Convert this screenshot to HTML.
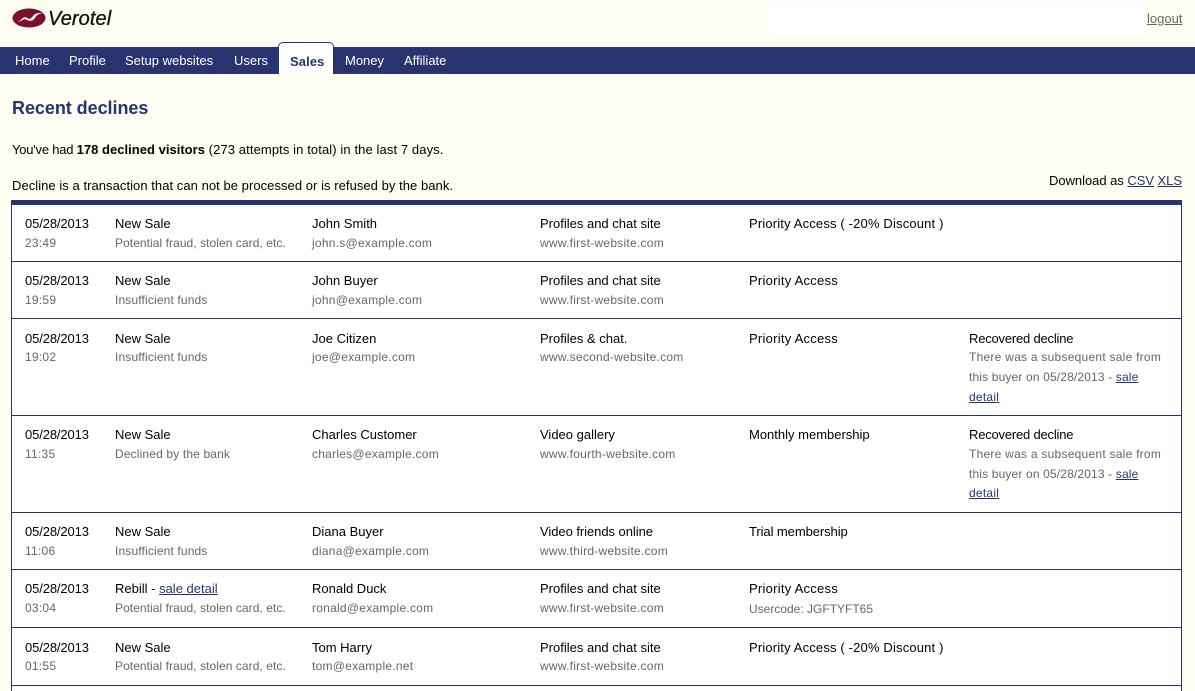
<!DOCTYPE html>
<html><head><meta charset="utf-8"><title>Recent declines</title>
<style>
html,body{margin:0;padding:0}
body{width:1195px;height:691px;overflow:hidden;position:relative;background:#fdfdf2;font-family:"Liberation Sans",Arial,sans-serif;font-size:13px;color:#000;letter-spacing:0}
a{color:#27346f;text-decoration:underline}
.t{position:absolute;white-space:nowrap;line-height:15px}
.g{color:#666;font-size:12px;letter-spacing:.25px;margin-top:1px}
.s{letter-spacing:.06px}
.i{letter-spacing:.15px}
.d{letter-spacing:-.12px}
.p{letter-spacing:.25px}
.r{letter-spacing:-.2px}
.b{position:absolute;background:#27346f}
.n{position:absolute;top:53px;color:#fff;line-height:15px;white-space:nowrap;letter-spacing:0}
.c1{left:25px}.c2{left:115px}.c3{left:312px}.c4{left:540px}.c5{left:749px}.c6{left:969px}
</style></head><body>
<svg style="position:absolute;left:12px;top:8px" width="34" height="20" viewBox="0 0 34 20"><ellipse cx="17" cy="10" rx="16.5" ry="9.5" fill="#7d0f2c"/><path d="M5 14C9 14 10 8 14 9.500C17 11 18 12 21 8C23 5 26 5 31 5C26 6 25 7 23 10C20 14 17 13 14 11.500C11 10 10 14 5 14Z" fill="#fff"/></svg>
<div style="position:absolute;left:48px;top:8px;font-size:20px;line-height:22px;font-style:italic;letter-spacing:.1px;color:#111;-webkit-text-stroke:.3px #111">Verotel</div>
<div style="position:absolute;left:769px;top:2px;width:377px;height:35px;background:#fff"></div>
<a class="t" href="#" style="left:1147px;top:11px;color:#666;letter-spacing:0">logout</a>

<div class="b" style="left:0;top:47px;width:1195px;height:27px"></div>
<div class="n" style="left:15px">Home</div>
<div class="n" style="left:69px">Profile</div>
<div class="n" style="left:125px">Setup websites</div>
<div class="n" style="left:234px">Users</div>
<div style="position:absolute;left:278px;top:42px;background:#fff;border:1px solid #27346f;border-bottom:0;border-radius:5px 5px 0 0;height:31px;width:54px"></div>
<div class="n" style="left:290px;top:54px;color:#27346f;font-weight:bold;letter-spacing:.1px">Sales</div>
<div class="n" style="left:345px">Money</div>
<div class="n" style="left:404px">Affiliate</div>

<div class="t" style="left:12px;top:97px;font-size:18px;line-height:22px;font-weight:bold;color:#27346f;letter-spacing:-.05px">Recent declines</div>
<div class="t" style="left:12px;top:142px;letter-spacing:.1px"><span style="letter-spacing:-.22px">You've had </span><b style="letter-spacing:.02px">178 declined visitors</b> (273 attempts in total) in the last 7 days.</div>
<div class="t" style="left:12px;top:178px;letter-spacing:.05px">Decline is a transaction that can not be processed or is refused by the bank.</div>
<div class="t" style="right:13px;top:173px;letter-spacing:-.04px">Download as <a href="#">CSV</a> <a href="#">XLS</a></div>

<div style="position:absolute;left:11px;top:200px;width:1169px;height:491px;background:#fff;border-left:1px solid #27346f;border-right:1px solid #27346f"></div>
<div class="b" style="left:11px;top:200px;width:1171px;height:5px"></div>
<div class="b" style="left:11px;top:261px;width:1171px;height:1px"></div>
<div class="b" style="left:11px;top:318px;width:1171px;height:1px"></div>
<div class="b" style="left:11px;top:415px;width:1171px;height:1px"></div>
<div class="b" style="left:11px;top:512px;width:1171px;height:1px"></div>
<div class="b" style="left:11px;top:569px;width:1171px;height:1px"></div>
<div class="b" style="left:11px;top:627px;width:1171px;height:1px"></div>
<div class="b" style="left:11px;top:685px;width:1171px;height:1px"></div>

<div class="t c1 d" style="top:216px">05/28/2013</div><div class="t c2" style="top:216px">New Sale</div><div class="t c3" style="top:216px">John Smith</div><div class="t c4" style="top:216px">Profiles and chat site</div><div class="t c5" style="top:216px;letter-spacing:.16px">Priority Access ( -20% Discount )</div>
<div class="t g c1" style="top:235px">23:49</div><div class="t g c2 s" style="top:235px">Potential fraud, stolen card, etc.</div><div class="t g c3" style="top:235px">john.s@example.com</div><div class="t g c4" style="top:235px">www.first-website.com</div>

<div class="t c1 d" style="top:273px">05/28/2013</div><div class="t c2" style="top:273px">New Sale</div><div class="t c3" style="top:273px">John Buyer</div><div class="t c4" style="top:273px">Profiles and chat site</div><div class="t c5 p" style="top:273px">Priority Access</div>
<div class="t g c1" style="top:292px">19:59</div><div class="t g c2 i" style="top:292px">Insufficient funds</div><div class="t g c3" style="top:292px">john@example.com</div><div class="t g c4" style="top:292px">www.first-website.com</div>

<div class="t c1 d" style="top:331px">05/28/2013</div><div class="t c2" style="top:331px">New Sale</div><div class="t c3" style="top:331px">Joe Citizen</div><div class="t c4" style="top:331px">Profiles &amp; chat.</div><div class="t c5 p" style="top:331px">Priority Access</div><div class="t c6 r" style="top:331px">Recovered decline</div>
<div class="t g c1" style="top:349px">19:02</div><div class="t g c2 i" style="top:349px">Insufficient funds</div><div class="t g c3" style="top:349px">joe@example.com</div><div class="t g c4" style="top:349px">www.second-website.com</div><div class="t g c6" style="top:349px">There was a subsequent sale from</div>
<div class="t g c6 i" style="top:369px">this buyer on 05/28/2013 - <a href="#">sale</a></div><div class="t g c6" style="top:389px"><a href="#">detail</a></div>

<div class="t c1 d" style="top:427px">05/28/2013</div><div class="t c2" style="top:427px">New Sale</div><div class="t c3" style="top:427px">Charles Customer</div><div class="t c4" style="top:427px">Video gallery</div><div class="t c5" style="top:427px">Monthly membership</div><div class="t c6 r" style="top:427px">Recovered decline</div>
<div class="t g c1" style="top:446px">11:35</div><div class="t g c2 i" style="top:446px">Declined by the bank</div><div class="t g c3" style="top:446px">charles@example.com</div><div class="t g c4" style="top:446px">www.fourth-website.com</div><div class="t g c6" style="top:446px">There was a subsequent sale from</div>
<div class="t g c6 i" style="top:466px">this buyer on 05/28/2013 - <a href="#">sale</a></div><div class="t g c6" style="top:485px"><a href="#">detail</a></div>

<div class="t c1 d" style="top:524px">05/28/2013</div><div class="t c2" style="top:524px">New Sale</div><div class="t c3" style="top:524px">Diana Buyer</div><div class="t c4" style="top:524px;letter-spacing:-.05px">Video friends online</div><div class="t c5" style="top:524px;letter-spacing:-.08px">Trial membership</div>
<div class="t g c1" style="top:543px">11:06</div><div class="t g c2 i" style="top:543px">Insufficient funds</div><div class="t g c3" style="top:543px">diana@example.com</div><div class="t g c4" style="top:543px">www.third-website.com</div>

<div class="t c1 d" style="top:581px">05/28/2013</div><div class="t c2" style="top:581px">Rebill - <a href="#">sale detail</a></div><div class="t c3" style="top:581px">Ronald Duck</div><div class="t c4" style="top:581px">Profiles and chat site</div><div class="t c5 p" style="top:581px">Priority Access</div>
<div class="t g c1" style="top:600px">03:04</div><div class="t g c2 s" style="top:600px">Potential fraud, stolen card, etc.</div><div class="t g c3" style="top:600px">ronald@example.com</div><div class="t g c4" style="top:600px">www.first-website.com</div><div class="t g c5" style="top:601px;letter-spacing:0">Usercode: JGFTYFT65</div>

<div class="t c1 d" style="top:640px">05/28/2013</div><div class="t c2" style="top:640px">New Sale</div><div class="t c3" style="top:640px">Tom Harry</div><div class="t c4" style="top:640px">Profiles and chat site</div><div class="t c5" style="top:640px;letter-spacing:.16px">Priority Access ( -20% Discount )</div>
<div class="t g c1" style="top:658px">01:55</div><div class="t g c2 s" style="top:658px">Potential fraud, stolen card, etc.</div><div class="t g c3" style="top:658px">tom@example.net</div><div class="t g c4" style="top:658px">www.first-website.com</div>
</body></html>
